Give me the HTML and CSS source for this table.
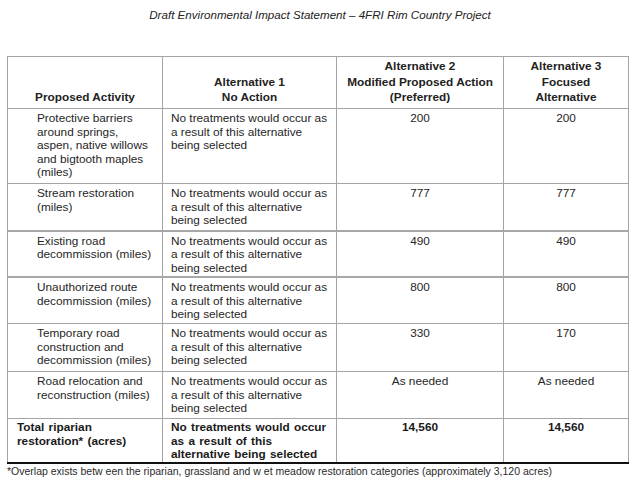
FILE: index.html
```html
<!DOCTYPE html>
<html>
<head>
<meta charset="utf-8">
<link rel="stylesheet" href="styles.css">
</head>
<body>
<div class="page">
  <p class="title">Draft Environmental Impact Statement – 4FRI Rim Country Project</p>
  <table class="eis">
    <colgroup>
      <col class="c1"><col class="c2"><col class="c3"><col class="c4">
    </colgroup>
    <thead>
      <tr class="h">
        <th>Proposed Activity</th>
        <th>Alternative 1<br>No Action</th>
        <th>Alternative 2<br>Modified Proposed Action<br>(Preferred)</th>
        <th>Alternative 3<br>Focused<br>Alternative</th>
      </tr>
    </thead>
    <tbody>
      <tr class="r1">
        <td class="act">Protective barriers around springs, aspen, native willows and bigtooth maples (miles)</td>
        <td class="none">No treatments would occur as a result of this alternative being selected</td>
        <td class="num">200</td>
        <td class="num">200</td>
      </tr>
      <tr class="r2">
        <td class="act">Stream restoration (miles)</td>
        <td class="none">No treatments would occur as a result of this alternative being selected</td>
        <td class="num">777</td>
        <td class="num">777</td>
      </tr>
      <tr class="r3 thick">
        <td class="act">Existing road decommission (miles)</td>
        <td class="none">No treatments would occur as a result of this alternative being selected</td>
        <td class="num">490</td>
        <td class="num">490</td>
      </tr>
      <tr class="r4 thick">
        <td class="act">Unauthorized route decommission (miles)</td>
        <td class="none">No treatments would occur as a result of this alternative being selected</td>
        <td class="num">800</td>
        <td class="num">800</td>
      </tr>
      <tr class="r5">
        <td class="act">Temporary road construction and decommission (miles)</td>
        <td class="none">No treatments would occur as a result of this alternative being selected</td>
        <td class="num">330</td>
        <td class="num">170</td>
      </tr>
      <tr class="r6">
        <td class="act">Road relocation and reconstruction (miles)</td>
        <td class="none">No treatments would occur as a result of this alternative being selected</td>
        <td class="num">As needed</td>
        <td class="num">As needed</td>
      </tr>
      <tr class="r7 total">
        <td class="act">Total riparian restoration* (acres)</td>
        <td class="none">No treatments would occur as a result of this alternative being selected</td>
        <td class="num">14,560</td>
        <td class="num">14,560</td>
      </tr>
    </tbody>
  </table>
  <p class="note">*Overlap exists betw een the riparian, grassland and w et meadow restoration categories (approximately 3,120 acres)</p>
</div>
</body>
</html>
```

FILE: styles.css
```css
html, body {
  margin: 0;
  padding: 0;
  background: #ffffff;
}
body {
  font-family: "Liberation Sans", Arial, sans-serif;
  color: #262626;
  width: 640px;
  height: 486px;
  overflow: hidden;
}
.page {
  padding: 8px 0 0 7px;
}
.title {
  margin: 0;
  width: 626px;
  text-align: center;
  font-style: italic;
  font-size: 11.6px;
  line-height: 14px;
  color: #222;
}
.eis {
  margin-top: 34px;
  border-collapse: collapse;
  table-layout: fixed;
  width: 621px;
  font-size: 11.8px;
  line-height: 13.6px;
}
.c1 { width: 155px; }
.c2 { width: 174px; }
.c3 { width: 167px; }
.c4 { width: 125px; }
.eis th, .eis td {
  border: 1px solid #a4a4a4;
  padding: 3px 4px 1px 8px;
  vertical-align: top;
}
.eis th {
  font-weight: bold;
  text-align: center;
  vertical-align: bottom;
  line-height: 15.6px;
  padding: 2px 2px 2px 2px;
  color: #222;
}
.h { height: 52px; }
.r1 { height: 75px; }
.r2 { height: 47px; }
.r3 { height: 45px; }
.r4 { height: 46px; }
.r5 { height: 48px; }
.r6 { height: 47px; }
.r7 { height: 44px; }
.thick td { border-top: 2px solid #a8a8a8; }
.eis td.act {
  padding-left: 29px;
  padding-right: 8px;
}
.eis td.num {
  text-align: center;
  padding-left: 4px;
}
.total td {
  font-weight: bold;
  color: #1a1a1a;
  border-bottom: 2px solid #111;
  word-spacing: 1px;
  padding-top: 2px;
  padding-bottom: 0;
}
.eis .total td.act {
  padding-left: 9px;
}
.note {
  margin: 1px 0 0 0;
  font-size: 10.5px;
  line-height: 13px;
  color: #2a2a2a;
}
```
